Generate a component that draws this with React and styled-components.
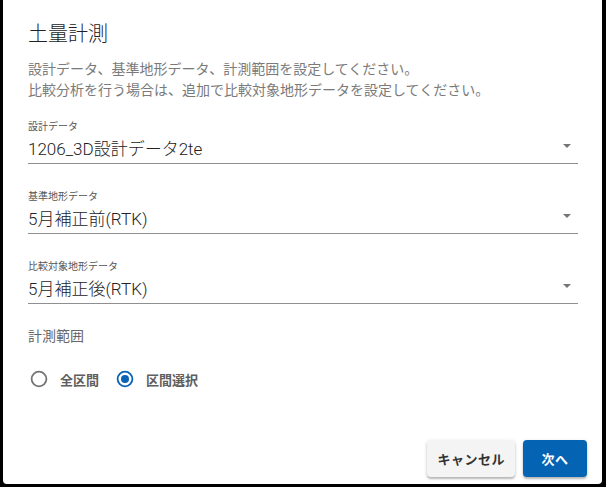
import { useState } from "react";
import styled, { createGlobalStyle } from "styled-components";

const GlobalStyle = createGlobalStyle`
  html, body {
    margin: 0;
    padding: 0;
    background: #000;
  }
  * {
    box-sizing: border-box;
  }
`;

const fields = [
  { label: "設計データ", value: "1206_3D設計データ2te" },
  { label: "基準地形データ", value: "5月補正前(RTK)" },
  { label: "比較対象地形データ", value: "5月補正後(RTK)" },
];

const ranges = ["全区間", "区間選択"];

export default function App() {
  const [range, setRange] = useState("区間選択");

  return (
    <>
      <GlobalStyle />
      <Backdrop>
        <Dialog>
          <Content>
            <Title>土量計測</Title>
            <Description>
              設計データ、基準地形データ、計測範囲を設定してください。
              <br />
              比較分析を行う場合は、追加で比較対象地形データを設定してください。
            </Description>

            <FieldList>
              {fields.map((f) => (
                <Field key={f.label}>
                  <FieldLabel>{f.label}</FieldLabel>
                  <SelectRow>
                    <SelectValue>{f.value}</SelectValue>
                    <ArrowIcon viewBox="0 0 8 4" width="8" height="4">
                      <polygon points="0,0 8,0 4,4" fill="#757575" />
                    </ArrowIcon>
                  </SelectRow>
                </Field>
              ))}
            </FieldList>

            <SectionTitle>計測範囲</SectionTitle>
            <RadioGroup>
              {ranges.map((r) => (
                <RadioOption key={r} onClick={() => setRange(r)}>
                  <RadioIcon viewBox="0 0 20 20" width="20" height="20">
                    <circle
                      cx="10"
                      cy="10"
                      r="7.4"
                      fill="none"
                      stroke={range === r ? "#0a62b6" : "#757575"}
                      strokeWidth="1.8"
                    />
                    {range === r && <circle cx="10" cy="10" r="4" fill="#0a62b6" />}
                  </RadioIcon>
                  <RadioLabel>{r}</RadioLabel>
                </RadioOption>
              ))}
            </RadioGroup>
          </Content>

          <Actions>
            <Button>キャンセル</Button>
            <Button $primary>次へ</Button>
          </Actions>
        </Dialog>
      </Backdrop>
    </>
  );
}

const Backdrop = styled.div`
  height: 487px;
  width: 606px;
  padding: 0 4px 3px 3px;
  background: #000;
`;

const Dialog = styled.div`
  height: 100%;
  background: #fff;
  border-radius: 0 0 4px 4px;
  display: flex;
  flex-direction: column;
  font-family: Roboto, "Noto Sans CJK JP", sans-serif;
`;

const Content = styled.div`
  padding: 18px 24px 0 25px;
  display: flex;
  flex-direction: column;
`;

const Title = styled.h2`
  margin: 0;
  font-size: 20px;
  line-height: 32px;
  font-weight: 300;
  color: #222;
`;

const Description = styled.p`
  margin: 9px 0 0;
  font-size: 14px;
  line-height: 21px;
  color: #7a7a7a;
`;

const FieldList = styled.div`
  margin-top: 20px;
  display: flex;
  flex-direction: column;
  gap: 27px;
`;

const Field = styled.div`
  display: flex;
  flex-direction: column;
`;

const FieldLabel = styled.label`
  font-size: 10px;
  line-height: 12px;
  color: #555;
`;

const SelectRow = styled.div`
  display: flex;
  align-items: center;
  justify-content: space-between;
  padding: 4px 7px 2px 0;
  border-bottom: 1px solid #8f8f8f;
`;

const SelectValue = styled.span`
  font-size: 17px;
  line-height: 24px;
  font-weight: 300;
  color: #222;
`;

const ArrowIcon = styled.svg`
  display: block;
  margin-top: -6px;
`;

const SectionTitle = styled.div`
  margin-top: 22px;
  font-size: 14px;
  line-height: 20px;
  color: #666;
`;

const RadioGroup = styled.div`
  margin-top: 14px;
  height: 38px;
  display: flex;
  align-items: center;
  gap: 16px;
  padding-left: 1px;
`;

const RadioOption = styled.div`
  display: flex;
  align-items: center;
  gap: 11px;
  cursor: pointer;
`;

const RadioIcon = styled.svg`
  display: block;
`;

const RadioLabel = styled.span`
  font-size: 13px;
  font-weight: 700;
  color: #5e5e5e;
`;

const Actions = styled.div`
  margin-top: auto;
  display: flex;
  justify-content: flex-end;
  gap: 8px;
  padding: 0 15px 7px 0;
`;

const Button = styled.button`
  height: 37px;
  min-width: 64px;
  padding: 0 10px;
  border: none;
  border-radius: 4px;
  font-family: Roboto, "Noto Sans CJK JP", sans-serif;
  font-size: 13px;
  font-weight: 700;
  letter-spacing: 0.5px;
  background: ${({ $primary }) => ($primary ? "#0563b4" : "#f4f4f4")};
  color: ${({ $primary }) => ($primary ? "#fff" : "#333")};
  box-shadow: 0 2px 2px rgba(0, 0, 0, 0.22), 0 1px 4px rgba(0, 0, 0, 0.12);
  cursor: pointer;
`;
